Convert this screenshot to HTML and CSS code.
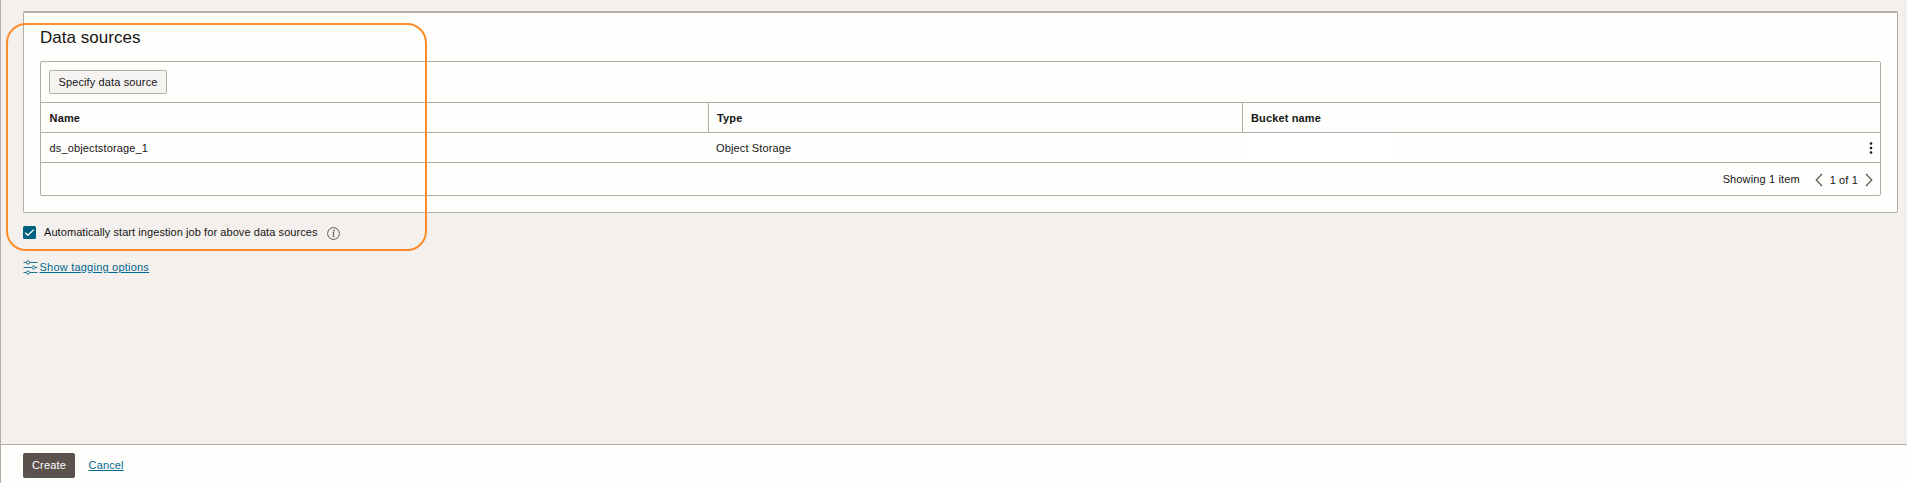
FILE: index.html
```html
<!DOCTYPE html>
<html lang="en">
<head>
<meta charset="utf-8">
<title>Data sources</title>
<link rel="stylesheet" href="styles.css">
</head>
<body>
<div class="page">
  <main class="content">
    <section class="panel">
      <h2 class="title">Data sources</h2>
      <div class="table">
        <div class="toolbar"><button class="btn">Specify data source</button></div>
        <div class="row head">
          <div class="cell first">Name</div><div class="cell">Type</div><div class="cell">Bucket name</div>
        </div>
        <div class="row">
          <div class="cell first">ds_objectstorage_1</div><div class="cell">Object Storage</div>
          <div class="cell bucket"><span class="redacted"></span>
            <svg class="kebab" width="4" height="12" viewBox="0 0 4 12"><circle cx="2" cy="1.5" r="1.3"/><circle cx="2" cy="6" r="1.3"/><circle cx="2" cy="10.5" r="1.3"/></svg>
          </div>
        </div>
        <div class="pager">
          <span class="showing">Showing 1 item</span>
          <svg class="chev" width="8" height="14" viewBox="0 0 8 14"><path d="M7 1 1.2 7 7 13"/></svg>
          <span class="count">1 of 1</span>
          <svg class="chev" width="8" height="14" viewBox="0 0 8 14"><path d="M1 1 6.8 7 1 13"/></svg>
        </div>
      </div>
    </section>
    <label class="check">
      <svg width="13" height="13" viewBox="0 0 13 13"><rect width="13" height="13" rx="1.5" fill="#00607f"/><path d="M2.2 6.8 4.8 9.3 10.8 3.6" fill="none" stroke="#fff" stroke-width="1.3"/></svg>
      <span class="check-text">Automatically start ingestion job for above data sources</span>
      <svg class="info" width="13" height="13" viewBox="0 0 13 13"><circle cx="6.5" cy="6.5" r="5.9"/><path d="M5.4 5.4H6.8L6 9.4H7.4"/><circle class="dot" cx="7" cy="3.6" r=".8"/></svg>
    </label>
    <div class="tagging">
      <svg width="15" height="15" viewBox="0 0 15 15"><path d="M.5 2.500H3.200M6.800 2.500H14.500M.5 7.500H8.200M11.800 7.500H14.500M.5 12.500H3.200M6.800 12.500H14.500"/><circle cx="5" cy="2.500" r="1.600"/><circle cx="10.500" cy="7.500" r="1.600"/><circle cx="5" cy="12.500" r="1.600"/></svg>
      <a class="link show">Show tagging options</a>
    </div>
  </main>
  <footer class="footer"><button class="create">Create</button><a class="link cancel">Cancel</a></footer>
</div>
<div class="highlight"></div>
</body>
</html>
```
FILE: styles.css
```css
* { box-sizing: border-box; }
body { margin: 0; font: 11px/14px "Liberation Sans", Arial, sans-serif; color: #161513; background: #f4f0ee; letter-spacing: .13px; }
.page { height: 483px; display: flex; flex-direction: column; border-left: 1px solid #b3aca7; overflow: hidden; }
.content { flex: 1; padding: 11px 9px 0 22px; }
.panel { height: 202px; border: 1px solid #b3aca7; border-top-width: 2px; border-radius: 2px; background: #fefefc; padding: 0 16px; }
.title { margin: 0; height: 48px; padding-top: 14px; font-size: 17px; line-height: 22px; font-weight: 400; letter-spacing: 0.03px; }
.table { height: 135px; border: 1px solid #b3aca7; border-radius: 2px; display: flex; flex-direction: column; }
.toolbar { height: 40px; padding: 8px; }
.btn { display: block; width: 118px; height: 24px; padding: 0; border: 1px solid #b3aca7; border-radius: 2px; background: #f5f4f2; font: inherit; color: inherit; letter-spacing: .13px; white-space: nowrap; }
.row { height: 30px; border-top: 1px solid #b3aca7; display: grid; grid-template-columns: 667px 534px 1fr; line-height: 31px; }
.cell { padding-left: 8px; height: 29px; }
.first { padding-left: 8.600px; }
.head { font-weight: 700; }
.head .cell + .cell { border-left: 1px solid #b3aca7; }
.bucket { display: flex; align-items: center; justify-content: space-between; padding: 0 7px 0 1px; }
.redacted { width: 150px; height: 25px; background: #fff; }
.kebab { fill: #161513; margin-top: 1px; }
.pager { height: 33px; border-top: 1px solid #b3aca7; display: flex; justify-content: flex-end; align-items: center; padding: 1px 7px 0 0; }
.showing { margin-right: 15px; padding-bottom: 2px; }
.chev { fill: none; stroke: #5b5652; stroke-width: 1.2; }
.count { margin: 0 7px; }
.check { display: flex; align-items: center; height: 13px; margin-top: 13px; letter-spacing: .07px; }
.check-text { margin: -1px 9px 0 8px; }
.info { fill: none; stroke: #4c4845; stroke-width: .9; margin-top: 2px; }
.info .dot { fill: #4c4845; stroke: none; }
.tagging { display: flex; align-items: center; height: 15px; margin-top: 21px; gap: 1.500px; letter-spacing: .22px; }
.tagging svg { fill: none; stroke: #1c7390; stroke-width: 1; }
.show { margin-top: -1px; }
.link { color: #00688c; text-decoration: underline; }
.footer { height: 39px; border-top: 1px solid #b3aca7; background: #fefefc; display: flex; align-items: flex-start; padding: 8px 0 0 22px; }
.create { width: 52px; height: 25px; padding: 0 0 1px; border: 0; border-radius: 2px; background: #5b524e; color: #fff; font: inherit; letter-spacing: .2px; }
.cancel { margin: 5px 0 0 13.600px; }
.highlight { position: absolute; left: 6px; top: 23px; width: 421px; height: 228px; border: 2px solid #ff8b29; border-radius: 20px; pointer-events: none; }
```
